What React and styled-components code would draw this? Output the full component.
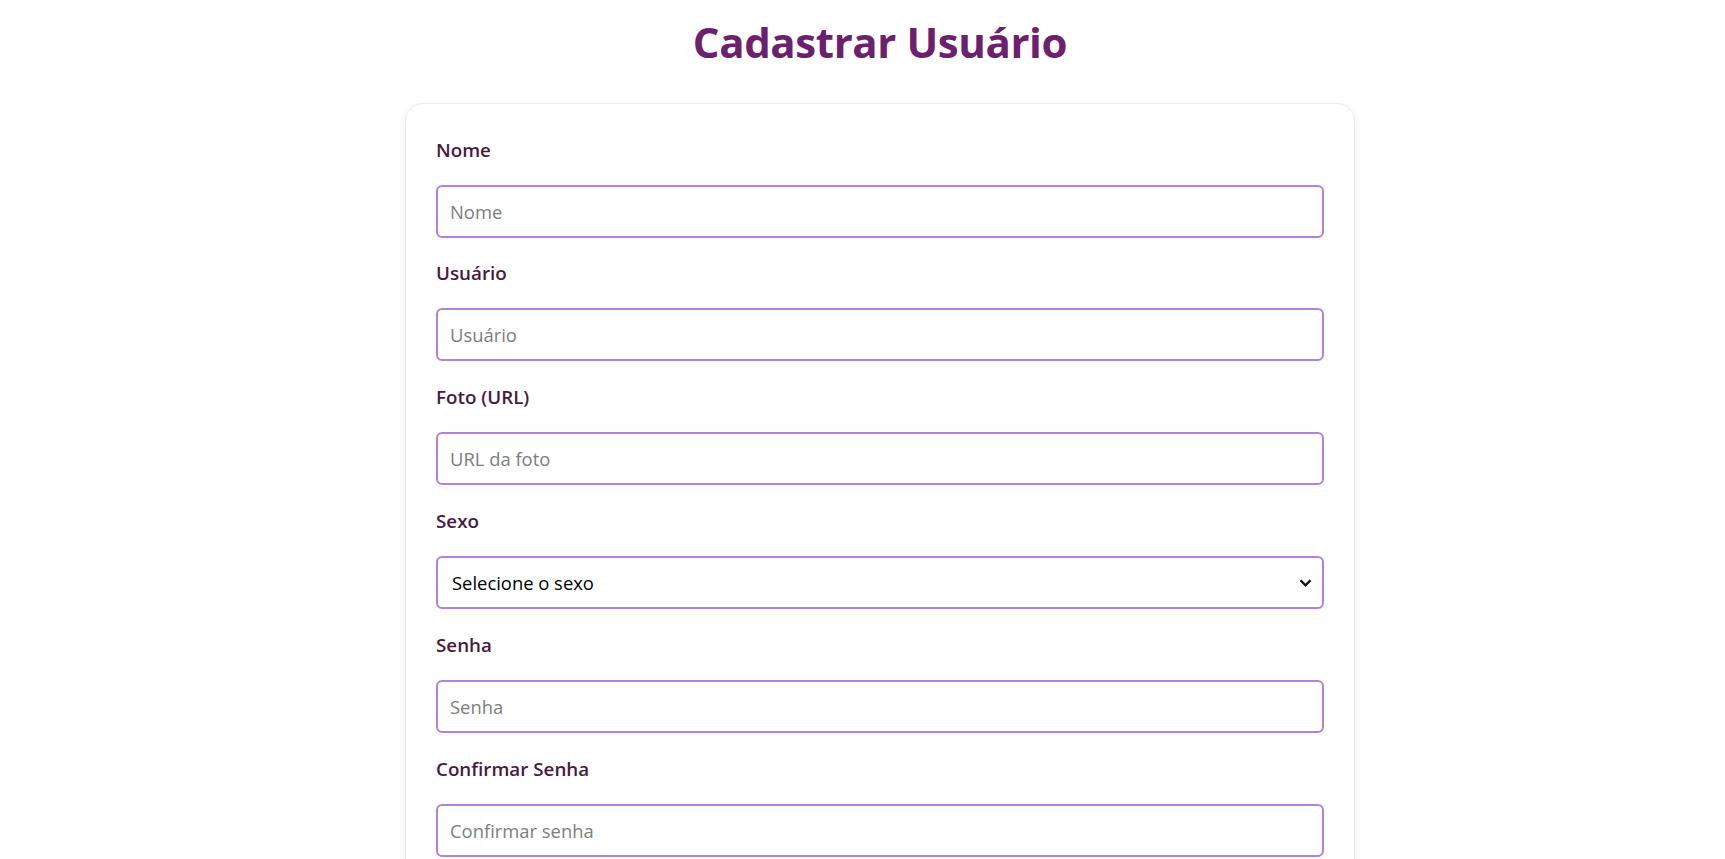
import React from "react";
import styled, { createGlobalStyle } from "styled-components";

const GlobalStyle = createGlobalStyle`
  html, body {
    margin: 0;
    padding: 0;
    background: #ffffff;
    font-family: "Open Sans", "Noto Sans", Arial, sans-serif;
  }
  * { box-sizing: border-box; }
`;

const Page = styled.main`
  padding: 12px 0 40px 35px;
  display: flex;
  flex-direction: column;
  align-items: center;
`;

const Title = styled.h1`
  margin: 0 0 31px;
  font-size: 42px;
  line-height: 60px;
  font-weight: 700;
  color: #6b2170;
  letter-spacing: -0.4px;
`;

const Card = styled.form`
  width: 950px;
  background: #fff;
  border: 1px solid #ececec;
  border-radius: 18px;
  box-shadow: 0 2px 10px rgba(0, 0, 0, 0.06);
  padding: 33.5px 30px 30px;
  display: flex;
  flex-direction: column;
`;

const Field = styled.div`
  display: flex;
  flex-direction: column;
  margin-bottom: 23.9px;
`;

const Label = styled.label`
  font-size: 18.8px;
  line-height: 24px;
  font-weight: 600;
  color: #4a1942;
  margin-bottom: 23px;
`;

const Input = styled.input`
  height: 53px;
  width: 100%;
  border: 2px solid #b57fdf;
  border-radius: 6px;
  padding: 0 12px;
  font-family: inherit;
  font-size: 18.4px;
  color: #222;
  background: #fff;
  outline: none;
  &::placeholder {
    color: #7d7d7d;
  }
`;

const SelectWrap = styled.div`
  position: relative;
`;

const Select = styled.select`
  appearance: none;
  height: 53px;
  width: 100%;
  border: 2px solid #b57fdf;
  border-radius: 6px;
  padding: 0 14px;
  font-family: inherit;
  font-size: 18.4px;
  color: #000;
  background: #fff;
  outline: none;
`;

const Chevron = styled.svg`
  position: absolute;
  right: 12px;
  top: 50%;
  transform: translateY(-50%);
  pointer-events: none;
`;

const fields = [
  { label: "Nome", placeholder: "Nome" },
  { label: "Usuário", placeholder: "Usuário" },
  { label: "Foto (URL)", placeholder: "URL da foto" },
  { label: "Sexo", select: true },
  { label: "Senha", placeholder: "Senha", type: "password" },
  { label: "Confirmar Senha", placeholder: "Confirmar senha", type: "password" },
];

export default function App() {
  return (
    <>
      <GlobalStyle />
      <Page>
        <Title>Cadastrar Usuário</Title>
        <Card onSubmit={(e) => e.preventDefault()}>
          {fields.map((f) => (
            <Field key={f.label}>
              <Label>{f.label}</Label>
              {f.select ? (
                <SelectWrap>
                  <Select defaultValue="">
                    <option value="">Selecione o sexo</option>
                    <option value="M">Masculino</option>
                    <option value="F">Feminino</option>
                  </Select>
                  <Chevron width="13" height="9" viewBox="0 0 13 9">
                    <path d="M1.5 1.8 L6.5 6.8 L11.5 1.8" fill="none" stroke="#111" strokeWidth="2.3" />
                  </Chevron>
                </SelectWrap>
              ) : (
                <Input type={f.type || "text"} placeholder={f.placeholder} />
              )}
            </Field>
          ))}
        </Card>
      </Page>
    </>
  );
}
